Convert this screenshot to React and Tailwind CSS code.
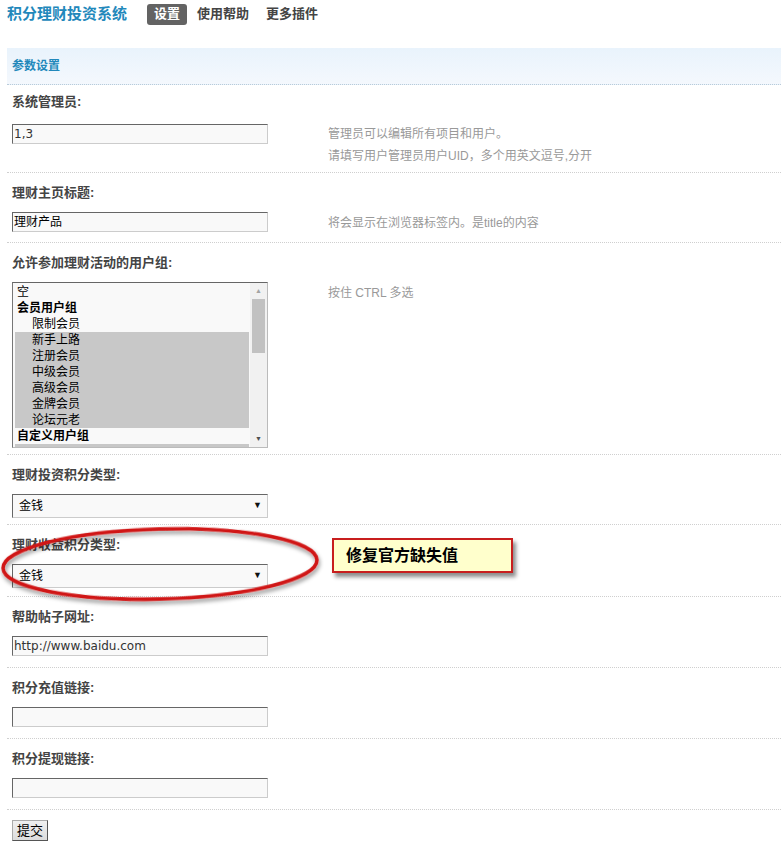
import React from 'react';

const font = "font-['Liberation_Sans','Noto_Sans_CJK_SC',sans-serif]";

const groups = [
  { name: '空', bold: false, indent: false, sel: false },
  { name: '会员用户组', bold: true, indent: false, sel: false },
  { name: '限制会员', bold: false, indent: true, sel: false },
  { name: '新手上路', bold: false, indent: true, sel: true },
  { name: '注册会员', bold: false, indent: true, sel: true },
  { name: '中级会员', bold: false, indent: true, sel: true },
  { name: '高级会员', bold: false, indent: true, sel: true },
  { name: '金牌会员', bold: false, indent: true, sel: true },
  { name: '论坛元老', bold: false, indent: true, sel: true },
  { name: '自定义用户组', bold: true, indent: false, sel: false },
];

function TextInput({ value, mono }) {
  return (
    <div
      className={`w-[256px] h-[20px] shrink-0 bg-[#f9f9f9] border border-t-[#666] border-l-[#666] border-r-[#ccc] border-b-[#ccc] flex items-center pl-[1px] text-[12px] ${
        mono ? "font-['DejaVu_Sans',sans-serif] text-[#333]" : 'text-black'
      }`}
    >
      {value}
    </div>
  );
}

function Select({ value }) {
  return (
    <div className="w-[256px] h-[24px] shrink-0 bg-[#f9f9f9] border border-t-[#666] border-l-[#666] border-r-[#ccc] border-b-[#ccc] flex items-center justify-between pl-[6px] pr-[5px] text-[12px] text-black">
      <span>{value}</span>
      <span className="text-[9px] text-[#111]">▼</span>
    </div>
  );
}

function MultiSelect() {
  return (
    <div className="w-[256px] h-[166px] shrink-0 bg-[#f9f9f9] border border-t-[#666] border-l-[#777] border-r-[#bbb] border-b-[#bbb] flex overflow-hidden">
      <div className="flex-1 pt-[1px] pl-[2px] pr-[1px] overflow-hidden">
        {groups.map((g) => (
          <div
            key={g.name}
            className={`h-[16px] leading-[16px] text-[12px] text-black ${g.bold ? 'font-bold' : ''} ${
              g.indent ? 'pl-[17px]' : 'pl-[2px]'
            } ${g.sel ? 'bg-[#c8c8c8]' : ''}`}
          >
            {g.name}
          </div>
        ))}
        {/* next selected option, only its top edge is visible */}
        <div className="h-[16px] bg-[#c8c8c8]"></div>
      </div>
      <div className="w-[17px] bg-[#f1f1f1] flex flex-col">
        <div className="h-[16px] flex items-center justify-center text-[7px] text-[#a3a3a3]">▲</div>
        <div className="h-[54px] mx-[2px] bg-[#c1c1c1]"></div>
        <div className="flex-1"></div>
        <div className="h-[16px] flex items-center justify-center text-[7px] text-[#505050]">▼</div>
      </div>
    </div>
  );
}

function Help({ children }) {
  return <div className="ml-[60px] text-[12px] leading-[22px] text-[#999]">{children}</div>;
}

function Row({ label, first, h, children }) {
  return (
    <div className={first ? '' : 'border-t border-dotted border-[#cfcfcf]'}>
      <div
        className={`h-[39px] flex items-center pl-[5px] text-[13px] font-bold text-[#444] ${first ? 'pb-[6px]' : ''}`}
      >
        {label}
      </div>
      <div className={`flex items-start pl-[5px] ${h}`}>{children}</div>
    </div>
  );
}

export default function App() {
  return (
    <div className={`relative w-[781px] h-[866px] bg-white pl-[7px] ${font}`}>
      <div className="h-[48px]">
        <div className="h-[28px] flex items-center">
          <span className="text-[15px] font-bold text-[#2288bb]">积分理财投资系统</span>
          <span className="ml-[20px] h-[21px] px-[7px] flex items-center rounded-[3px] bg-[#636363] text-white text-[13px] font-bold">
            设置
          </span>
          <span className="ml-[3px] px-[7px] text-[13px] font-bold text-[#444]">使用帮助</span>
          <span className="ml-[3px] px-[7px] text-[13px] font-bold text-[#444]">更多插件</span>
        </div>
      </div>

      <div className="h-[37px] flex items-center pl-[5px] bg-gradient-to-b from-[#e9f3fc] to-[#f4f8fd] border-b border-dotted border-[#b9cbd9] text-[12px] font-bold text-[#2288bb]">
        参数设置
      </div>

      <Row label="系统管理员:" first h="h-[48px]">
        <TextInput value="1,3" mono />
        <div className="-mt-[1px]">
          <Help>
            管理员可以编辑所有项目和用户。
            <br />
            请填写用户管理员用户UID，多个用英文逗号,分开
          </Help>
        </div>
      </Row>

      <Row label="理财主页标题:" h="h-[30px]">
        <TextInput value="理财产品" />
        <Help>将会显示在浏览器标签内。是title的内容</Help>
      </Row>

      <Row label="允许参加理财活动的用户组:" h="h-[172px]">
        <MultiSelect />
        <Help>按住 CTRL 多选</Help>
      </Row>

      <Row label="理财投资积分类型:" h="h-[30px]">
        <Select value="金钱" />
      </Row>

      <Row label="理财收益积分类型:" h="h-[32px]">
        <Select value="金钱" />
      </Row>

      <Row label="帮助帖子网址:" h="h-[31px]">
        <TextInput value="http://www.baidu.com" mono />
      </Row>

      <Row label="积分充值链接:" h="h-[31px]">
        <TextInput value="" />
      </Row>

      <Row label="积分提现链接:" h="h-[31px]">
        <TextInput value="" />
      </Row>

      <div className="border-t border-dotted border-[#cfcfcf] pt-[8px] pl-[5px]">
        <button className="w-[36px] h-[21px] bg-gradient-to-b from-[#f0f0f0] to-[#dcdcdc] border border-t-[#aaa] border-l-[#aaa] border-r-[#555] border-b-[#555] text-[13px] text-black leading-none">
          提交
        </button>
      </div>

      {/* annotation overlay */}
      <svg className="absolute left-0 top-[519px]" width="330" height="92" viewBox="0 0 330 92">
        <defs>
          <filter id="sh" x="-10%" y="-20%" width="120%" height="150%">
            <feDropShadow dx="1" dy="3" stdDeviation="2" floodColor="#000" floodOpacity="0.45" />
          </filter>
        </defs>
        <ellipse
          cx="160"
          cy="45"
          rx="157"
          ry="35"
          transform="rotate(-1.5 160 45)"
          fill="none"
          stroke="#d01414"
          strokeWidth="3.5"
          filter="url(#sh)"
        />
      </svg>
      <div className="absolute left-[332px] top-[538px] w-[181px] h-[35px] border-2 border-[#c81e1e] bg-[#ffffcc] shadow-[3px_4px_4px_rgba(0,0,0,0.45)] flex items-center pl-[12px] text-[16px] font-bold text-black">
        修复官方缺失值
      </div>
    </div>
  );
}
